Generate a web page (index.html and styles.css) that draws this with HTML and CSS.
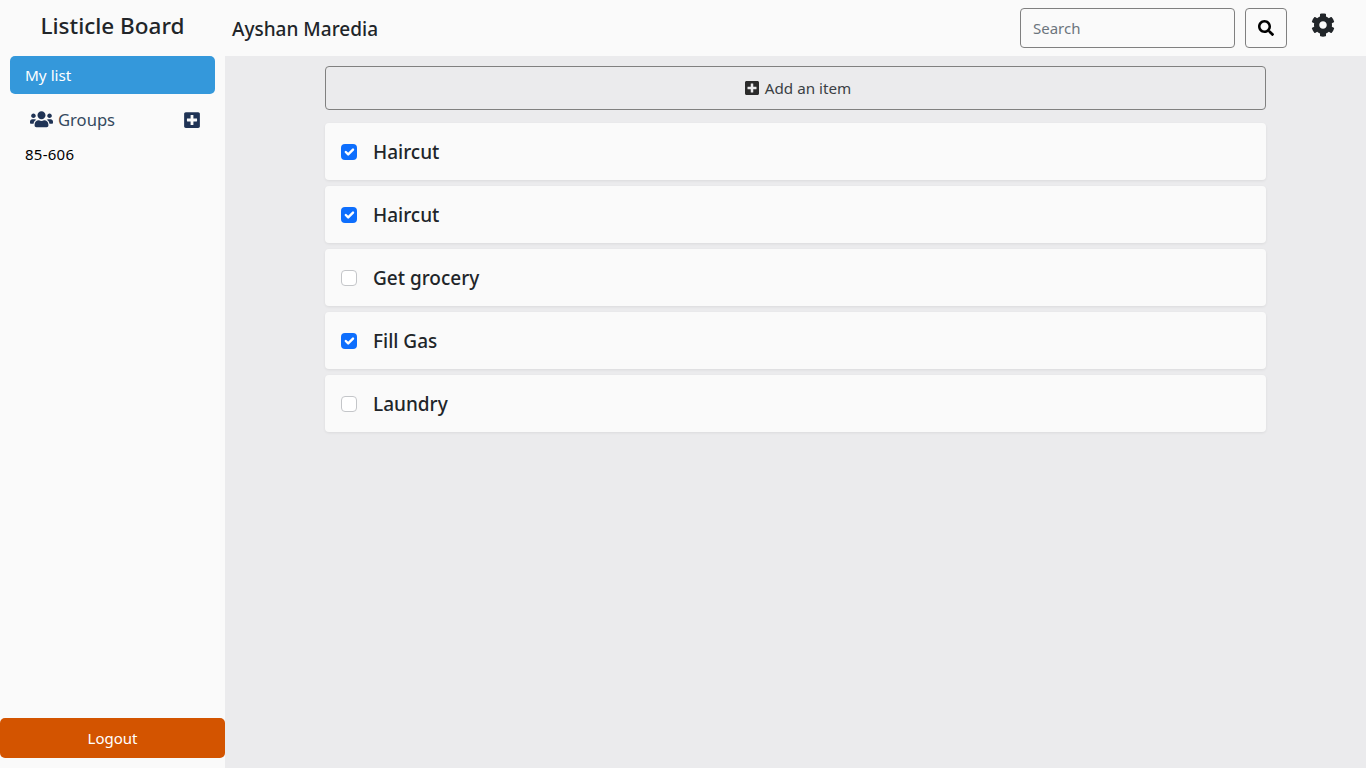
FILE: index.html
```html
<!DOCTYPE html>
<html lang="en">
<head>
<meta charset="utf-8">
<title>Listicle Board</title>
<link rel="stylesheet" href="styles.css">
</head>
<body>
<div class="app">
  <header class="topbar">
    <div class="brand">Listicle Board</div>
    <div class="user">Ayshan Maredia</div>
    <form class="search">
      <input class="search-input" type="text" placeholder="Search">
      <button class="search-btn" type="button" aria-label="Search">
        <svg class="icon-search" viewBox="0 0 512 512"><path d="M505 442.7L405.3 343c-4.5-4.5-10.6-7-17-7H372c27.6-35.3 44-79.7 44-128C416 93.1 322.9 0 208 0S0 93.1 0 208s93.1 208 208 208c48.3 0 92.7-16.4 128-44v16.3c0 6.4 2.5 12.5 7 17l99.7 99.7c9.4 9.4 24.6 9.4 33.9 0l28.3-28.3c9.4-9.4 9.4-24.6.1-34zM208 336c-70.7 0-128-57.2-128-128 0-70.7 57.2-128 128-128 70.7 0 128 57.2 128 128 0 70.7-57.2 128-128 128z"/></svg>
      </button>
    </form>
    <svg class="icon-cog" viewBox="0 0 512 512"><path d="M487.4 315.7l-42.6-24.6c4.3-23.2 4.3-47 0-70.2l42.6-24.6c4.9-2.8 7.1-8.6 5.5-14-11.1-35.6-30-67.8-54.7-94.6-3.8-4.1-10-5.1-14.8-2.3L380.8 110c-17.9-15.4-38.5-27.3-60.8-35.1V25.8c0-5.6-3.9-10.5-9.4-11.7-36.7-8.2-74.3-7.8-109.2 0-5.5 1.2-9.4 6.1-9.4 11.7V75c-22.2 7.9-42.8 19.8-60.8 35.1L88.7 85.5c-4.9-2.8-11-1.9-14.8 2.3-24.7 26.7-43.6 58.9-54.7 94.6-1.7 5.4.6 11.2 5.5 14L67.3 221c-4.3 23.2-4.3 47 0 70.2l-42.6 24.6c-4.9 2.8-7.1 8.6-5.5 14 11.1 35.6 30 67.8 54.7 94.6 3.8 4.1 10 5.1 14.8 2.3l42.6-24.6c17.9 15.4 38.5 27.3 60.8 35.1v49.2c0 5.6 3.9 10.5 9.4 11.7 36.7 8.2 74.3 7.8 109.2 0 5.5-1.2 9.4-6.1 9.4-11.7v-49.2c22.2-7.9 42.8-19.8 60.8-35.1l42.6 24.6c4.9 2.8 11 1.9 14.8-2.3 24.7-26.7 43.6-58.9 54.7-94.6 1.5-5.5-.7-11.3-5.6-14.1zM256 336c-44.1 0-80-35.9-80-80s35.9-80 80-80 80 35.9 80 80-35.9 80-80 80z"/></svg>
  </header>
  <div class="body">
    <aside class="sidebar">
      <a class="nav-active">My list</a>
      <div class="groups">
        <svg class="icon-users" viewBox="0 0 640 512"><path d="M96 224c35.3 0 64-28.7 64-64s-28.7-64-64-64-64 28.7-64 64 28.7 64 64 64zm448 0c35.3 0 64-28.7 64-64s-28.7-64-64-64-64 28.7-64 64 28.7 64 64 64zm32 32h-64c-17.6 0-33.5 7.1-45.1 18.6 40.3 22.1 68.9 62 75.1 109.4h66c17.7 0 32-14.3 32-32v-32c0-35.3-28.7-64-64-64zm-256 0c61.9 0 112-50.1 112-112S381.9 32 320 32 208 82.1 208 144s50.1 112 112 112zm76.8 32h-8.3c-20.8 10-43.9 16-68.5 16s-47.6-6-68.5-16h-8.3C179.6 288 128 339.6 128 403.2V432c0 26.5 21.5 48 48 48h288c26.5 0 48-21.5 48-48v-28.8c0-63.6-51.6-115.2-115.2-115.2zm-223.7-13.4C161.5 263.1 145.6 256 128 256H64c-35.3 0-64 28.7-64 64v32c0 17.7 14.3 32 32 32h65.9c6.3-47.4 34.9-87.3 75.2-109.4z"/></svg>
        <span class="groups-label">Groups</span>
        <svg class="icon-plus-nav" viewBox="0 0 448 512"><path d="M400 32H48C21.5 32 0 53.5 0 80v352c0 26.5 21.5 48 48 48h352c26.5 0 48-21.5 48-48V80c0-26.5-21.5-48-48-48zm-32 252c0 6.6-5.4 12-12 12h-92v92c0 6.6-5.4 12-12 12h-56c-6.6 0-12-5.4-12-12v-92H92c-6.6 0-12-5.4-12-12v-56c0-6.6 5.4-12 12-12h92v-92c0-6.6 5.4-12 12-12h56c6.6 0 12 5.4 12 12v92h92c6.6 0 12 5.4 12 12v56z"/></svg>
      </div>
      <a class="group-link">85-606</a>
      <button class="logout" type="button">Logout</button>
    </aside>
    <main class="main">
      <button class="add-btn" type="button">
        <svg class="icon-plus-add" viewBox="0 0 448 512"><path d="M400 32H48C21.5 32 0 53.5 0 80v352c0 26.5 21.5 48 48 48h352c26.5 0 48-21.5 48-48V80c0-26.5-21.5-48-48-48zm-32 252c0 6.6-5.4 12-12 12h-92v92c0 6.6-5.4 12-12 12h-56c-6.6 0-12-5.4-12-12v-92H92c-6.6 0-12-5.4-12-12v-56c0-6.6 5.4-12 12-12h92v-92c0-6.6 5.4-12 12-12h56c6.6 0 12 5.4 12 12v92h92c6.6 0 12 5.4 12 12v56z"/></svg>
        <span>Add an item</span>
      </button>
      <ul class="items">
        <li class="item"><span class="check checked"><svg viewBox="0 0 20 20"><path fill="none" stroke="#fff" stroke-linecap="round" stroke-linejoin="round" stroke-width="3" d="M6 10l3 3l6-6"/></svg></span><span class="item-title">Haircut</span></li>
        <li class="item"><span class="check checked"><svg viewBox="0 0 20 20"><path fill="none" stroke="#fff" stroke-linecap="round" stroke-linejoin="round" stroke-width="3" d="M6 10l3 3l6-6"/></svg></span><span class="item-title">Haircut</span></li>
        <li class="item"><span class="check"></span><span class="item-title">Get grocery</span></li>
        <li class="item"><span class="check checked"><svg viewBox="0 0 20 20"><path fill="none" stroke="#fff" stroke-linecap="round" stroke-linejoin="round" stroke-width="3" d="M6 10l3 3l6-6"/></svg></span><span class="item-title">Fill Gas</span></li>
        <li class="item"><span class="check"></span><span class="item-title">Laundry</span></li>
      </ul>
    </main>
  </div>
</div>
</body>
</html>
```

FILE: styles.css
```css
* { box-sizing: border-box; }
html, body { margin: 0; height: 100%; }
body {
  font-family: "Noto Sans", "Open Sans", sans-serif;
  color: #212529;
  background: #ebebed;
  font-size: 15px;
}
.app { display: flex; flex-direction: column; height: 768px; overflow: hidden; }

.topbar {
  display: flex;
  align-items: center;
  height: 56px;
  flex: none;
  background: #fafafa;
}
.brand {
  width: 225px;
  flex: none;
  text-align: center;
  font-size: 22.5px;
  font-weight: 500;
  line-height: 32px;
  margin-top: -4px;
}
.user {
  margin-left: 7px;
  font-size: 19px;
  font-weight: 500;
  line-height: 28px;
  margin-top: 2px;
}
.search { display: flex; gap: 10px; margin-left: auto; }
.search-input {
  width: 215px;
  height: 40px;
  padding: 0 12px;
  border: 1px solid #808080;
  border-radius: 4px;
  background: #fafafa;
  font: 15px "Noto Sans", "Open Sans", sans-serif;
  color: #212529;
}
.search-input::placeholder { color: #6c757d; opacity: 1; }
.search-btn {
  display: flex;
  align-items: center;
  justify-content: center;
  width: 42px;
  height: 40px;
  padding: 0;
  border: 1px solid #808080;
  border-radius: 4px;
  background: #fafafa;
}
.icon-search { width: 16px; height: 16px; fill: #000; }
.icon-cog { width: 24px; height: 24px; fill: #212529; margin: -6px 31px 0 24px; }

.body { display: flex; flex: 1; min-height: 0; }
.sidebar {
  width: 225px;
  flex: none;
  display: flex;
  flex-direction: column;
  background: #fafafa;
  padding-bottom: 10px;
}
.nav-active {
  display: block;
  height: 38px;
  margin: 0 10px;
  padding-left: 15px;
  border-radius: 5px;
  background: #3498db;
  color: #fff;
  font-size: 15.3px;
  line-height: 38px;
}
.groups {
  display: flex;
  align-items: center;
  height: 24px;
  margin-top: 14px;
  padding: 0 25px 0 30px;
}
.icon-users { width: 23px; height: 18.4px; fill: #1f3355; margin-top: -1px; }
.groups-label { margin-left: 5px; font-size: 16.6px; color: #34495e; margin-top: -2px; }
.icon-plus-nav { width: 16px; height: 18px; fill: #1f3355; margin-left: auto; }
.group-link {
  display: block;
  margin-top: 12px;
  padding-left: 25px;
  font-size: 15px;
  letter-spacing: .25px;
  line-height: 21px;
  color: #000;
}
.logout {
  margin-top: auto;
  height: 40px;
  border: 0;
  border-radius: 5px;
  background: #d35400;
  color: #fff;
  font: 15px "Noto Sans", "Open Sans", sans-serif;
}

.main { flex: 1; min-width: 0; padding: 10px 100px 0; }
.add-btn {
  display: flex;
  align-items: center;
  justify-content: center;
  width: 100%;
  height: 44px;
  padding: 0 0 0 5px;
  border: 1px solid #808080;
  border-radius: 4px;
  background: #ebebed;
  color: #3a3f44;
  font: 15.2px "Noto Sans", "Open Sans", sans-serif;
}
.icon-plus-add { width: 14px; height: 16px; fill: #2b2b2b; margin-right: 6px; }
.items { list-style: none; margin: 13px 0 0; padding: 0; display: flex; flex-direction: column; gap: 6px; }
.item {
  display: flex;
  align-items: center;
  height: 57px;
  padding-left: 16px;
  background: #fafafa;
  border-radius: 4px;
  box-shadow: 0 1px 3px rgba(0, 0, 0, .07);
}
.check {
  width: 16px;
  height: 16px;
  flex: none;
  border: 1px solid #c4c6c9;
  border-radius: 4px;
  background: #fff;
}
.check svg { display: block; width: 16px; height: 16px; }
.check.checked { border: 0; background: #0d6efd; }
.item-title { margin-left: 16px; font-size: 19px; font-weight: 500; }
```
